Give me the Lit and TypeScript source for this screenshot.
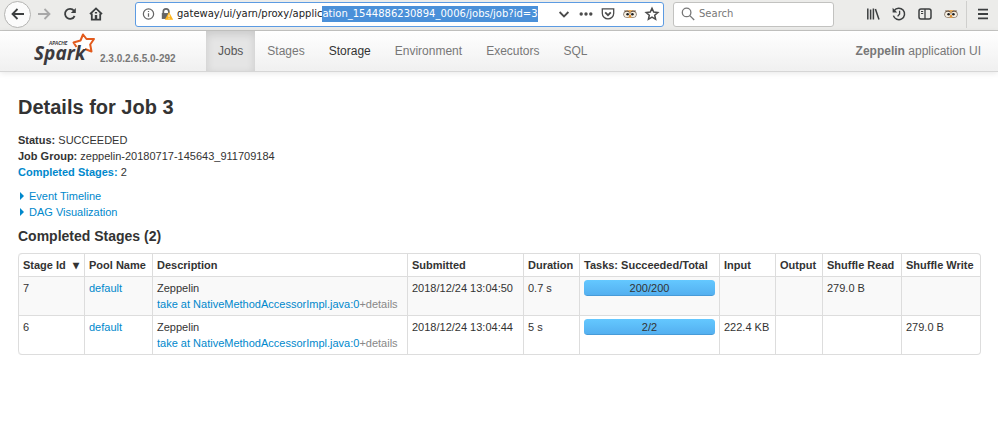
import { LitElement, html, svg, css } from "lit";
import { customElement, query } from "lit/decorators.js";

const owl = svg`
  <g stroke="none">
    <ellipse cx="10" cy="10" rx="6" ry="4" fill="#e8a64e"/>
    <ellipse cx="6.900" cy="10.200" rx="3.600" ry="3.500" fill="#85776a"/>
    <ellipse cx="13.100" cy="10.200" rx="3.600" ry="3.500" fill="#85776a"/>
    <path d="M4 6.400 7.500 6.600 10 8l2.500-1.400 3.500-.2-1 1.600H5z" fill="#6b5644"/>
    <ellipse cx="6.900" cy="10.400" rx="2.800" ry="2.700" fill="#f8f0e2"/>
    <ellipse cx="13.100" cy="10.400" rx="2.800" ry="2.700" fill="#f8f0e2"/>
    <circle cx="7.600" cy="10.200" r="1.300" fill="#1c1c1c"/>
    <circle cx="12.400" cy="10.200" r="1.300" fill="#1c1c1c"/>
    <path d="M8.800 11h2.400L10 14.200z" fill="#f0962a"/>
    <path d="M9 7.600h2l-1 2z" fill="#f3b75f"/>
  </g>`;

const icons = {
  back: svg`<path d="M16 10H4.5M9.5 5l-5 5 5 5" class="heavy"/>`,
  forward: svg`<path d="M4 10h11.5M10.5 5l5 5-5 5" class="heavy"/>`,
  reload: svg`<path d="M14.6 12a5 5 0 1 1-.6-5.2" class="heavy"/><path d="M15.8 4v5h-5z" class="solid"/>`,
  home: svg`<path d="M4 10.2 10 4.4l6 5.8M5.8 9.5v6.2h8.4V9.5" class="heavy"/><path d="M8.8 11h2.4v4.6H8.8zM8.9 8h2.2v1.6H8.9z" class="solid"/>`,
  info: svg`<circle cx="10" cy="10" r="5.4"/><path d="M10 9.2v3.8M10 6.8v1.2"/>`,
  lock: svg`<path d="M5.600 10V7.400a2.900 2.900 0 0 1 5.800 0V9" class="heavy"/><path d="M4 9h7.400v6.200H4z" class="solid"/><path d="M11.600 7.800 16 16H7.200z" fill="#ffb61e" stroke="none"/><path d="M11.6 10.600v2.600M11.6 14v1" class="light"/>`,
  down: svg`<path d="m5.6 8 4.4 4.4L14.4 8" class="heavy"/>`,
  dots: svg`<circle cx="5.2" cy="10" r="1.7" class="solid"/><circle cx="10" cy="10" r="1.7" class="solid"/><circle cx="14.8" cy="10" r="1.7" class="solid"/>`,
  pocket: svg`<path d="M4.3 4.8h11.4v4.4a5.7 5.7 0 0 1-11.4 0z"/><path d="m7.2 8.4 2.8 2.8 2.8-2.8" class="heavy"/>`,
  owl,
  star: svg`<path d="m10 4.3 1.7 3.8 4.1.4-3.1 2.7.9 4.1-3.6-2.1-3.6 2.1.9-4.1-3.1-2.7 4.1-.4z" class="mid"/>`,
  search: svg`<circle cx="8.6" cy="8.4" r="4.3"/><path d="m11.8 11.6 4.4 4.4"/>`,
  library: svg`<path d="M4.8 4.5v11M7.6 5.500v10M10.4 4.5v11M12.4 5l3.6 10.5" class="mid"/>`,
  history: svg`<path d="M5.2 6.6a5.700 5.700 0 1 1-.8 5" class="mid"/><path d="M3.6 3.8v4.6h4.6z" class="solid"/><path d="M10.6 6.8V10l-2 2.4"/>`,
  sidebar: svg`<rect x="4" y="5" width="12" height="10" rx="2" class="mid"/><path d="M10 5v10"/><path d="M6 7.500h2.200M6 9.500h2.200" stroke-width="1"/>`,
  menu: svg`<path d="M5 5.7h10M5 10h10M5 14.3h10" class="heavy"/>`,
};

type IconName = keyof typeof icons;

const icon = (name: IconName) =>
  html`<svg class="icon" viewBox="0 0 20 20" aria-hidden="true">${icons[name]}</svg>`;

const tool = (name: IconName, label: string, extra = "") =>
  html`<button class="tool ${extra}" type="button" aria-label=${label}>${icon(name)}</button>`;

interface Stage {
  id: number;
  submitted: string;
  duration: string;
  done: number;
  total: number;
  input: string;
  output: string;
  read: string;
  write: string;
}

const stages: Stage[] = [
  { id: 7, submitted: "2018/12/24 13:04:50", duration: "0.7 s", done: 200, total: 200, input: "", output: "", read: "279.0 B", write: "" },
  { id: 6, submitted: "2018/12/24 13:04:44", duration: "5 s", done: 2, total: 2, input: "222.4 KB", output: "", read: "", write: "279.0 B" },
];

@customElement("browser-bar")
class BrowserBar extends LitElement {
  @query(".address") address!: HTMLInputElement;

  firstUpdated() {
    this.address.focus();
    this.address.setSelectionRange(28, this.address.value.length);
  }

  static styles = css`
    :host {
      display: flex;
      align-items: center;
      box-sizing: border-box;
      height: 31px;
      padding: 0 2px 2px 4px;
      background: #ececea;
      border-bottom: 1px solid #c6c6c4;
      font-family: "DejaVu Sans", sans-serif;
      font-size: 10px;
      color: #3c3f40;
    }
    .icon {
      display: block;
      width: 20px;
      height: 20px;
      flex: none;
      fill: none;
      stroke: currentColor;
      stroke-width: 1.3;
    }
    .heavy { stroke-width: 1.8; }
    .mid { stroke-width: 1.5; }
    .solid { fill: currentColor; stroke: none; }
    .light { stroke: #fff; stroke-width: 1; }
    .tool {
      display: flex;
      align-items: center;
      justify-content: center;
      flex: none;
      width: 26px;
      height: 26px;
      padding: 0;
      border: 0;
      background: none;
      color: inherit;
    }
    .tool.back {
      box-sizing: border-box;
      width: 27px;
      height: 27px;
      border: 1px solid #b4b4b2;
      border-radius: 50%;
      background: #fbfbfb;
    }
    .tool.dim { color: #a8a8a8; }
    .tool.slim { width: 22px; height: 22px; color: #4b4b4b; }
    .field {
      display: flex;
      align-items: center;
      box-sizing: border-box;
      height: 25px;
      background: #fff;
      border: 1px solid #c2c2c0;
      border-radius: 3px;
    }
    .url {
      flex: 1;
      min-width: 0;
      margin-left: 26px;
      padding: 0 0 0 3px;
      border-color: #5c9be2;
    }
    .url > .icon { width: 19px; color: #666; }
    .find {
      width: 161px;
      margin: 0 26px 0 9px;
      padding: 0 4px;
      gap: 1px;
      color: #777;
    }
    input {
      flex: 1;
      min-width: 0;
      padding: 0;
      border: 0;
      outline: 0;
      background: none;
      font: inherit;
      color: #222;
    }
    .address::selection { background: #4a90d9; color: #fff; }
    .find input::placeholder { color: #777; opacity: 1; }
    .rule {
      width: 1px;
      height: 27px;
      margin: 0 3px 0 2px;
      background: #cfcfcd;
    }
  `;

  render() {
    return html`
      ${tool("back", "Back", "back")}
      ${tool("forward", "Forward", "dim")}
      ${tool("reload", "Reload")}
      ${tool("home", "Home")}
      <div class="field url">
        ${icon("info")}${icon("lock")}
        <input class="address" type="text" aria-label="Address" spellcheck="false"
          value="gateway/ui/yarn/proxy/application_1544886230894_0006/jobs/job?id=3" />
        ${tool("down", "Show history", "slim")}
        ${tool("dots", "Page actions", "slim")}
        ${tool("pocket", "Save to Pocket", "slim")}
        ${tool("owl", "Privacy", "slim")}
        ${tool("star", "Bookmark", "slim")}
      </div>
      <div class="field find">
        ${icon("search")}
        <input type="text" aria-label="Search" placeholder="Search" />
      </div>
      ${tool("library", "Library")}
      ${tool("history", "History")}
      ${tool("sidebar", "Sidebars")}
      ${tool("owl", "Privacy tools")}
      <span class="rule"></span>
      ${tool("menu", "Menu")}
    `;
  }
}

@customElement("spark-nav")
class SparkNav extends LitElement {
  static styles = css`
    :host {
      display: flex;
      align-items: stretch;
      box-sizing: border-box;
      height: 41px;
      padding: 0 17px 0 33px;
      background: linear-gradient(#fff, #f0f0f0);
      border-bottom: 1px solid #d6d6d6;
      box-shadow: 0 1px 6px rgba(0, 0, 0, 0.1);
      font-size: 12px;
      color: #777;
    }
    .brand {
      display: flex;
      width: 173px;
      text-decoration: none;
      color: #777;
    }
    .logo { width: 64px; height: 40px; flex: none; }
    .word { font: italic 700 19px "Open Sans", sans-serif; fill: #3c3a3e; }
    .small { font: italic 900 5px Lato, sans-serif; fill: #3c3a3e; }
    .spark { fill: #fff; stroke: #e25a1c; stroke-width: 2; stroke-linejoin: round; }
    .version {
      margin: 20px 0 0 3px;
      font-size: 10px;
      line-height: 16px;
      font-weight: 700;
    }
    nav { display: flex; flex: 1; }
    nav a {
      padding: 0 12px;
      line-height: 40px;
      color: #777;
      text-decoration: none;
    }
    nav a.active {
      color: #555;
      background: #e5e5e5;
      box-shadow: inset 0 3px 8px rgba(0, 0, 0, 0.125);
    }
    nav a.hover { color: #333; }
    .app { margin: 0; line-height: 40px; }
  `;

  render() {
    const tabs = [
      ["Jobs", "active"], ["Stages", ""], ["Storage", "hover"],
      ["Environment", ""], ["Executors", ""], ["SQL", ""],
    ];
    return html`
      <a class="brand" href="#">
        <svg class="logo" viewBox="0 0 64 40" role="img" aria-label="Apache Spark">
          <path class="spark" d="M43.500 16 40.500 11.500 47.500 9.500 50 3.500 53.500 8 61 8 57.200 13.500 58.500 20.500 52 18"/>
          <text class="small" x="16" y="14">APACHE</text>
          <text class="word" x="1" y="29">Spark</text>
        </svg>
        <span class="version">2.3.0.2.6.5.0-292</span>
      </a>
      <nav>${tabs.map(([t, c]) => html`<a class=${c} href="#">${t}</a>`)}</nav>
      <p class="app"><strong>Zeppelin</strong> application UI</p>
    `;
  }
}

@customElement("app-root")
class AppRoot extends LitElement {
  static styles = css`
    :host {
      display: block;
      min-height: 100vh;
      background: #fff;
      font-family: "Liberation Sans", Arial, sans-serif;
      font-size: 11px;
      line-height: 16px;
      color: #333;
    }
    main { padding: 23px 17px 0 18px; }
    a { color: #08c; text-decoration: none; }
    h1 { margin: 0; font-size: 20px; line-height: 24px; }
    h2 { margin: 8px 0 9px; font-size: 14px; line-height: 16px; }
    ul { margin: 13px 0 8px; padding: 0; list-style: none; }
    .toggle {
      display: flex;
      align-items: center;
      gap: 5px;
      padding: 0;
      border: 0;
      background: none;
      font: inherit;
      color: #08c;
    }
    .arrow {
      width: 0;
      height: 0;
      margin-left: 2px;
      border: 4px solid transparent;
      border-left-color: #08c;
      border-right: 0;
    }
    table {
      width: 100%;
      table-layout: fixed;
      border: 1px solid #ddd;
      border-left: 0;
      border-radius: 4px;
      border-collapse: separate;
      border-spacing: 0;
    }
    th, td {
      box-sizing: border-box;
      padding: 3px 4px;
      border-left: 1px solid #ddd;
      text-align: left;
      vertical-align: top;
      white-space: nowrap;
    }
    td { border-top: 1px solid #ddd; }
    th:first-child { border-top-left-radius: 4px; }
    tr:last-child td:first-child { border-bottom-left-radius: 4px; }
    tbody tr:nth-child(odd) td { background: #f9f9f9; }
    .sort { margin-left: 4px; font-size: 12px; line-height: 12px; }
    .details { color: #888; }
    .w-id { width: 66px; }
    .w-pool { width: 68px; }
    .w-sub { width: 116px; }
    .w-dur { width: 56px; }
    .w-tasks { width: 140px; }
    .w-out { width: 47px; }
    .w-shuf { width: 79px; }
    .progress {
      position: relative;
      height: 16px;
      border-radius: 3px;
      background: #f7f7f7;
      overflow: hidden;
      text-align: center;
    }
    .fill {
      position: absolute;
      inset: 0 auto 0 0;
      box-sizing: border-box;
      border-radius: 3px;
      background: linear-gradient(#64c8ff, #54b0f0);
      border-bottom: 1px solid #479bd8;
    }
    .count { position: relative; }
  `;

  row(s: Stage) {
    return html`<tr>
      <td>${s.id}</td>
      <td><a href="#">default</a></td>
      <td>Zeppelin<br /><a href="#">take at NativeMethodAccessorImpl.java:0</a><span class="details">+details</span></td>
      <td>${s.submitted}</td>
      <td>${s.duration}</td>
      <td>
        <div class="progress" role="progressbar" aria-label="Tasks" aria-valuenow=${s.done} aria-valuemax=${s.total}>
          <div class="fill" style="width:${(100 * s.done) / s.total}%"></div>
          <span class="count">${s.done}/${s.total}</span>
        </div>
      </td>
      <td>${s.input}</td>
      <td>${s.output}</td>
      <td>${s.read}</td>
      <td>${s.write}</td>
    </tr>`;
  }

  render() {
    return html`
      <browser-bar></browser-bar>
      <spark-nav></spark-nav>
      <main>
        <h1>Details for Job 3</h1>
        <ul>
          <li><strong>Status:</strong> SUCCEEDED</li>
          <li><strong>Job Group:</strong> zeppelin-20180717-145643_911709184</li>
          <li><a href="#completed"><strong>Completed Stages:</strong></a> 2</li>
        </ul>
        <button class="toggle" type="button"><span class="arrow"></span>Event Timeline</button>
        <button class="toggle" type="button"><span class="arrow"></span>DAG Visualization</button>
        <h2 id="completed">Completed Stages (2)</h2>
        <table>
          <thead>
            <tr>
              <th class="w-id">Stage Id <span class="sort">▾</span></th>
              <th class="w-pool">Pool Name</th>
              <th>Description</th>
              <th class="w-sub">Submitted</th>
              <th class="w-dur">Duration</th>
              <th class="w-tasks">Tasks: Succeeded/Total</th>
              <th class="w-dur">Input</th>
              <th class="w-out">Output</th>
              <th class="w-shuf">Shuffle Read</th>
              <th class="w-shuf">Shuffle Write</th>
            </tr>
          </thead>
          <tbody>${stages.map((s) => this.row(s))}</tbody>
        </table>
      </main>
    `;
  }
}
